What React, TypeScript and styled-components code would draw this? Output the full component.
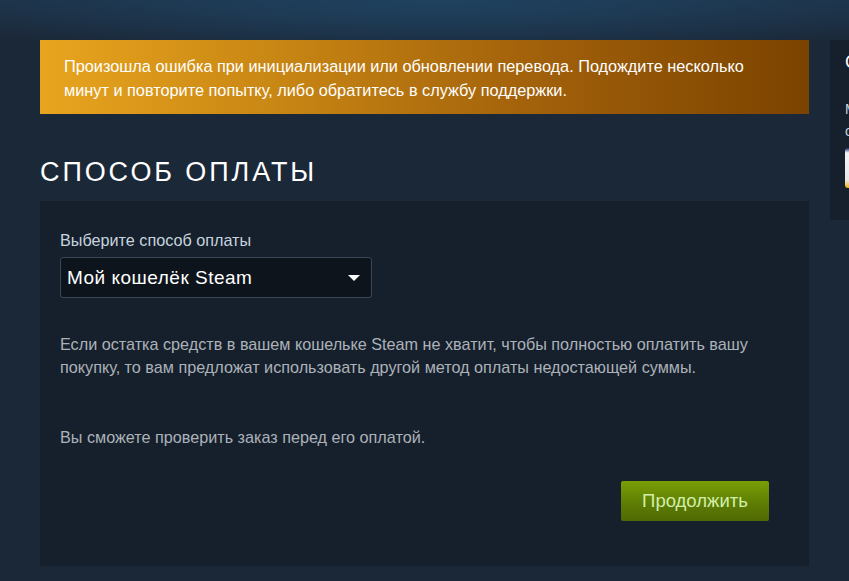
import React from "react";
import styled, { createGlobalStyle } from "styled-components";

const Global = createGlobalStyle`
  html, body { margin: 0; padding: 0; }
  body {
    background: #1b2838;
    font-family: "Liberation Sans", Arial, sans-serif;
    overflow: hidden;
  }
`;

const Page = styled.div`
  width: 849px;
  height: 581px;
  overflow: hidden;
  background:
    radial-gradient(ellipse 520px 60px at 52% 0px, #1f4260 0%, rgba(31, 66, 96, 0.6) 40%, rgba(27, 40, 56, 0) 100%),
    linear-gradient(180deg, #1d3248 0px, #1b2838 40px, #1b2838 100%);
  display: flex;
  align-items: flex-start;
  gap: 21px;
  padding: 40px 0 0 40px;
  box-sizing: border-box;
`;

const Main = styled.div`
  width: 769px;
  flex-shrink: 0;
  display: flex;
  flex-direction: column;
`;

const Banner = styled.div`
  height: 74px;
  box-sizing: border-box;
  padding: 14px 40px 0 24px;
  background: linear-gradient(90deg, #e8a51f 0%, #c98714 30%, #a1600a 65%, #7b4300 100%);
  color: #ffffff;
  font-size: 16.3px;
  line-height: 24px;
`;

const Heading = styled.h2`
  margin: 44px 0 15px 0;
  font-family: "Liberation Sans", Arial, sans-serif;
  font-weight: normal;
  font-size: 27px;
  line-height: 28px;
  letter-spacing: 2.9px;
  color: #ffffff;
`;

const Panel = styled.div`
  background: #16202d;
  height: 365px;
  box-sizing: border-box;
  padding: 30px 20px 0 20px;
  display: flex;
  flex-direction: column;
`;

const Label = styled.div`
  color: #c6d4df;
  font-size: 16.2px;
  line-height: 18px;
  margin-bottom: 8px;
`;

const Select = styled.div`
  width: 312px;
  height: 41px;
  box-sizing: border-box;
  background: #0e141b;
  border: 1px solid #3a4654;
  border-radius: 3px;
  display: flex;
  align-items: center;
  justify-content: space-between;
  padding: 0 11px 0 6px;
  color: #ffffff;
  font-size: 19px;
  letter-spacing: 0.5px;
`;

const Caret = styled.span`
  width: 0;
  height: 0;
  border-left: 6px solid transparent;
  border-right: 6px solid transparent;
  border-top: 6px solid #ffffff;
`;

const Para = styled.p<{ $top: number }>`
  margin: ${(p) => p.$top}px 0 0 0;
  color: #acb2b8;
  font-family: "Liberation Sans", Arial, sans-serif;
  font-size: 16.2px;
  line-height: 23px;
  max-width: 715px;
`;

const Actions = styled.div`
  display: flex;
  justify-content: flex-end;
  padding-right: 20px;
  margin-top: 32px;
`;

const Button = styled.button`
  width: 148px;
  height: 40px;
  border: none;
  border-radius: 2px;
  background: linear-gradient(180deg, #7a9e04 0%, #5c7b04 60%, #506804 100%);
  color: #d2efa9;
  font-family: "Liberation Sans", Arial, sans-serif;
  font-size: 18.5px;
  cursor: pointer;
`;

const Side = styled.div`
  width: 40px;
  height: 180px;
  flex-shrink: 0;
  background: #16202d;
  box-sizing: border-box;
  padding: 12px 0 0 15px;
  color: #ffffff;
  overflow: hidden;
`;

const SideTitle = styled.div`
  font-size: 18px;
  line-height: 20px;
  color: #ffffff;
  white-space: nowrap;
`;

const SideText = styled.div<{ $top: number }>`
  margin-top: ${(p) => p.$top}px;
  font-size: 14px;
  line-height: 22px;
  color: #c6d4df;
  white-space: nowrap;
`;

const SideImage = styled.div`
  margin-top: 6px;
  width: 30px;
  height: 40px;
  border-radius: 3px;
  background: linear-gradient(180deg, #1b2a66 0%, #f4f4f4 12%, #e8e8e8 80%, #f2b21a 100%);
`;

export default function App() {
  return (
    <>
      <Global />
      <Page>
        <Main>
          <Banner>
            Произошла ошибка при инициализации или обновлении перевода. Подождите несколько
            минут и повторите попытку, либо обратитесь в службу поддержки.
          </Banner>
          <Heading>СПОСОБ ОПЛАТЫ</Heading>
          <Panel>
            <Label>Выберите способ оплаты</Label>
            <Select>
              <span>Мой кошелёк Steam</span>
              <Caret />
            </Select>
            <Para $top={35}>
              Если остатка средств в вашем кошельке Steam не хватит, чтобы полностью оплатить вашу
              покупку, то вам предложат использовать другой метод оплаты недостающей суммы.
            </Para>
            <Para $top={47}>Вы сможете проверить заказ перед его оплатой.</Para>
            <Actions>
              <Button>Продолжить</Button>
            </Actions>
          </Panel>
        </Main>
        <Side>
          <SideTitle>Содержимое</SideTitle>
          <SideText $top={26}>Мой</SideText>
          <SideText $top={0}>о</SideText>
          <SideImage />
        </Side>
      </Page>
    </>
  );
}
